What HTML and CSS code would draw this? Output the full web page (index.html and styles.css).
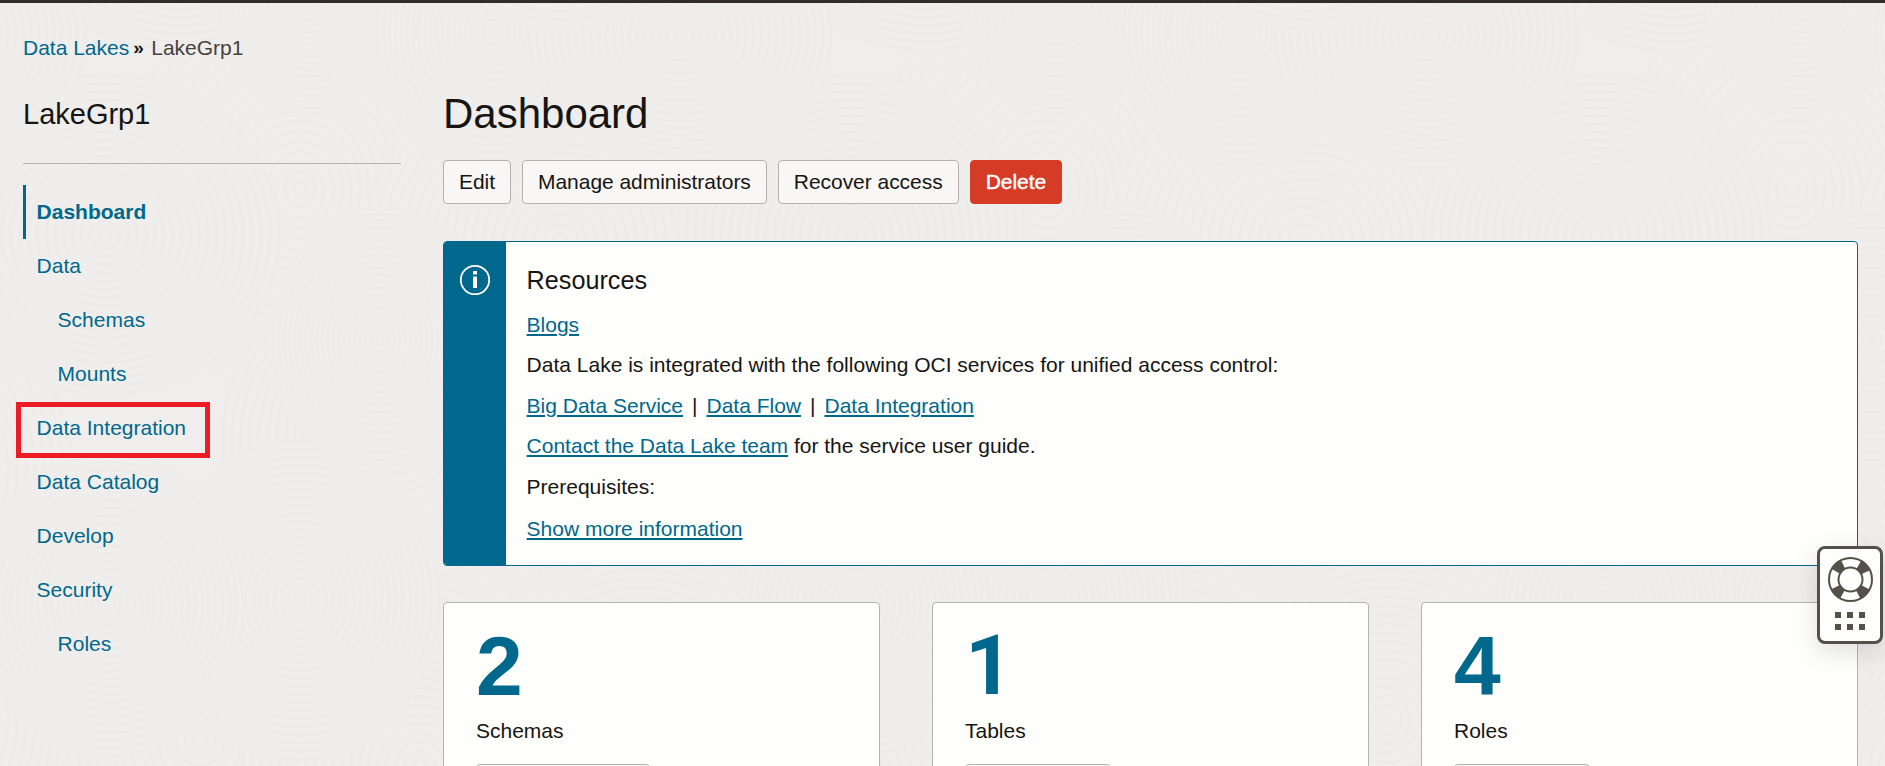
FILE: index.html
```html
<!DOCTYPE html>
<html lang="en">
<head>
<meta charset="utf-8">
<title>LakeGrp1 - Dashboard</title>
<link rel="stylesheet" href="styles.css">
</head>
<body>
<svg class="texture" width="1885" height="766" aria-hidden="true">
  <defs>
    <radialGradient id="rings" gradientUnits="userSpaceOnUse" cx="0" cy="0" r="9" spreadMethod="repeat">
      <stop offset="0" stop-color="#f0efed"/>
      <stop offset=".45" stop-color="#f0eeed"/>
      <stop offset=".75" stop-color="#ecebe9"/>
      <stop offset="1" stop-color="#f0efed"/>
    </radialGradient>
    <circle id="swirl" r="180" fill="url(#rings)"/>
    <pattern id="tile" width="746" height="766" patternUnits="userSpaceOnUse">
      <rect width="746" height="766" fill="#f0eeed"/>
      <use href="#swirl" transform="translate(300 190) scale(1 1.15)"/>
      <use href="#swirl" transform="translate(560 240) scale(1.1 1)"/>
      <use href="#swirl" x="400" y="440"/>
      <use href="#swirl" x="640" y="470"/>
      <use href="#swirl" x="-106" y="470"/>
      <use href="#swirl" x="200" y="740"/>
      <use href="#swirl" x="420" y="766"/>
      <use href="#swirl" x="640" y="720"/>
      <use href="#swirl" x="-106" y="720"/>
      <use href="#swirl" transform="translate(300 600) scale(.78 .9)"/>
      <use href="#swirl" transform="translate(110 605) scale(.75 .85)"/>
      <use href="#swirl" transform="translate(380 340) scale(.6 .75)"/>
      <use href="#swirl" transform="translate(105 235) scale(.98 .9)"/>
      <use href="#swirl" transform="translate(851 235) scale(.98 .9)"/>
      <use href="#swirl" transform="translate(180 -110) scale(1 .9)"/>
      <use href="#swirl" transform="translate(310 -10) scale(.55 .7)"/>
      <use href="#swirl" transform="translate(493 32) scale(.65 .8)"/>
      <use href="#swirl" transform="translate(680 35) scale(.85 .75)"/>
      <use href="#swirl" transform="translate(-66 35) scale(.85 .75)"/>
      <use href="#swirl" transform="translate(560 -132) scale(.9)"/>
    </pattern>
  </defs>
  <rect width="1885" height="766" fill="url(#tile)"/>
</svg>

<div class="page">
  <aside class="sidebar">
    <div class="breadcrumb"><a href="#">Data Lakes</a><b>»</b><span>LakeGrp1</span></div>
    <h2 class="group-title">LakeGrp1</h2>
    <nav class="nav">
      <a class="nav-item active" href="#">Dashboard</a>
      <a class="nav-item" href="#">Data</a>
      <a class="nav-item child" href="#">Schemas</a>
      <a class="nav-item child" href="#">Mounts</a>
      <a class="nav-item marked" href="#">Data Integration</a>
      <a class="nav-item" href="#">Data Catalog</a>
      <a class="nav-item" href="#">Develop</a>
      <a class="nav-item" href="#">Security</a>
      <a class="nav-item child" href="#">Roles</a>
    </nav>
  </aside>

  <main class="main">
    <h1 class="title">Dashboard</h1>
    <div class="actions">
      <button class="btn">Edit</button>
      <button class="btn">Manage administrators</button>
      <button class="btn">Recover access</button>
      <button class="btn danger">Delete</button>
    </div>

    <section class="info">
      <div class="info-stripe">
        <svg width="32" height="32" viewBox="0 0 32 32">
          <circle cx="16" cy="16" r="14.2" fill="none" stroke="#fff" stroke-width="1.8"/>
          <path d="M14 7h4v3.4h-4zM14 12.4h4V24h-4z" fill="#fff"/>
        </svg>
      </div>
      <div class="info-body">
        <h3>Resources</h3>
        <p><a href="#">Blogs</a></p>
        <p>Data Lake is integrated with the following OCI services for unified access control:</p>
        <p class="services"><a href="#">Big Data Service</a><i>|</i><a href="#">Data Flow</a><i>|</i><a href="#">Data Integration</a></p>
        <p><a href="#">Contact the Data Lake team</a> for the service user guide.</p>
        <p>Prerequisites:</p>
        <p><a href="#">Show more information</a></p>
      </div>
    </section>

    <section class="cards">
      <div class="card"><strong>2</strong><span>Schemas</span><div class="card-btn w-schemas"></div></div>
      <div class="card"><strong class="one">1</strong><span>Tables</span><div class="card-btn w-tables"></div></div>
      <div class="card"><strong>4</strong><span>Roles</span><div class="card-btn w-roles"></div></div>
    </section>
  </main>
</div>

<div class="help">
  <svg width="60" height="92" viewBox="0 0 60 92">
    <g fill="none" stroke="#55504c">
      <circle cx="30.5" cy="30.5" r="17" stroke-width="10" stroke-dasharray="10.2 16.503" stroke-dashoffset="-8.25"/>
      <circle cx="30.5" cy="30.5" r="21.5" stroke-width="2"/>
      <circle cx="30.5" cy="30.5" r="12" stroke-width="2"/>
    </g>
    <path fill="#55504c" d="M15 63h6v6h-6zM27 63h6v6h-6zM39 63h6v6h-6zM15 75h6v6h-6zM27 75h6v6h-6zM39 75h6v6h-6z"/>
  </svg>
</div>
</body>
</html>
```
FILE: styles.css
```css
*, *::after { box-sizing: border-box; margin: 0; padding: 0; }

body {
  width: 1885px;
  height: 766px;
  overflow: hidden;
  position: relative;
  background: #f0eeed;
  color: #161513;
  font: 21px/30px "Liberation Sans", Arial, sans-serif;
}

a { color: #00688c; text-decoration: none; }

.texture { position: absolute; inset: 0; }

.page {
  position: relative;
  display: flex;
  gap: 42px;
  height: 766px;
  overflow: hidden;
  border-top: 3px solid #312d2a;
  padding: 0 27px 0 23px;
}

.sidebar { width: 378px; flex: none; padding-top: 30px; }

.breadcrumb { display: flex; white-space: nowrap; color: #47423e; }
.breadcrumb b { width: 22px; padding-left: 4px; font-size: 19px; color: #161513; }

.group-title {
  height: 101px;
  padding-top: 32px;
  border-bottom: 1px solid #b5b2af;
  font-size: 29px;
  font-weight: 400;
  line-height: 38px;
}

.nav { padding-top: 21px; }
.nav-item {
  position: relative;
  display: block;
  height: 54px;
  padding-left: 13.6px;
  line-height: 54px;
}
.nav-item.child { padding-left: 34.6px; }
.nav-item.active { padding-left: 10.6px; border-left: 3px solid #00688c; font-weight: 700; }
.nav-item.marked::after {
  content: "";
  position: absolute;
  left: -7px;
  top: 1px;
  width: 194px;
  height: 56px;
  border: 5px solid #ed1c24;
}

.main { flex: 1; padding-top: 81px; }

.title { height: 76px; font-size: 42px; font-weight: 400; line-height: 60px; }

.actions { display: flex; gap: 11px; }
.btn {
  height: 44px;
  padding: 0 15px;
  border: 1px solid #b5b2af;
  border-radius: 4px;
  background: #f8f7f6;
  color: #161513;
  font: inherit;
  letter-spacing: -.04px;
}
.btn.danger { border-color: #d63b25; background: #d63b25; color: #fff; -webkit-text-stroke: .4px #fff; }

.info {
  display: flex;
  height: 325px;
  margin-top: 37px;
  border: 1px solid #00688c;
  border-radius: 4px;
  background: #fefefc;
  overflow: hidden;
}
.info-stripe { width: 62px; padding: 22px 0 0 15px; background: #00688c; }
.info-body { padding: 21px 20.6px; }
.info-body h3 { margin-bottom: 13px; font-size: 25.2px; font-weight: 400; line-height: 34px; }
.info-body p { margin-bottom: 10px; }
.info-body p:nth-of-type(even) { margin-bottom: 11px; }
.info-body p:nth-of-type(5) { margin-bottom: 12px; }
.info-body a { text-decoration: underline; text-decoration-thickness: 2px; text-underline-offset: 2px; }
.services i { padding: 0 9px; font-style: normal; }

.cards { display: grid; grid-template-columns: repeat(3, 437px); gap: 52px; margin-top: 36px; }
.card {
  display: flex;
  flex-direction: column;
  height: 300px;
  padding: 16px 32px;
  border: 1px solid #b5b2af;
  border-radius: 4px;
  background: #fefefc;
}
.card strong { color: #00688c; font-size: 84px; line-height: 94px; }
.card strong.one { font-family: Roboto, sans-serif; }
.card span { margin-top: 3px; }
.card-btn { height: 44px; margin-top: 18px; border: 1px solid #b5b2af; border-radius: 4px; background: #f8f7f6; }
.w-schemas { width: 174px; }
.w-tables { width: 146px; }
.w-roles { width: 136px; }

.help {
  position: absolute;
  left: 1817px;
  top: 546px;
  width: 66px;
  height: 98px;
  border: 3px solid #55504c;
  border-radius: 8px;
  background: #fefefc;
  box-shadow: 0 8px 26px rgba(0, 0, 0, .12);
}
.help svg { display: block; }
```
